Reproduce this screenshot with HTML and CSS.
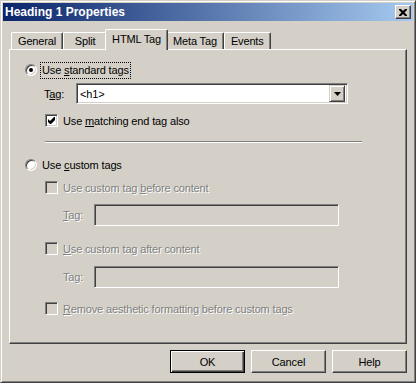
FILE: index.html
```html
<!DOCTYPE html>
<html lang="en">
<head>
    <meta charset="UTF-8">
    <title>Heading 1 Properties</title>
    <link rel="stylesheet" href="styles.css">
</head>
<body>

    <div class="window">
        <div class="titlebar">
            <span class="title">Heading 1 Properties</span>
            <span class="close">
                <svg width="8" height="7" viewBox="0 0 8 7"><path d="M0 0h2l2 2 2-2h2v1l-2.5 2.5 2.5 2.5v1h-2l-2-2-2 2h-2v-1l2.5-2.5-2.5-2.5z" fill="#000"/></svg>
            </span>
        </div>

        <div class="dialog">
            <div class="tabs">
                <div class="tab">General</div>
                <div class="tab">Split</div>
                <div class="tab active">HTML Tag</div>
                <div class="tab">Meta Tag</div>
                <div class="tab">Events</div>
            </div>

            <div class="panel">
                <div class="row r_std">
                    <span class="radio on"></span>
                    <span class="focus">Use <u>s</u>tandard tags</span>
                </div>

                <div class="row r_tag">
                    <span class="lbl">T<u>a</u>g:</span>
                    <div class="select">
                        <span class="value">&lt;h1&gt;</span>
                        <span class="drop">
                            <svg width="7" height="4" viewBox="0 0 7 4"><path d="M0 0h7l-3.5 4z" fill="#000"/></svg>
                        </span>
                    </div>
                </div>

                <div class="row sub r_match">
                    <span class="check">
                        <svg width="7" height="7" viewBox="0 0 7 7"><path d="M0 2L2 4L6 0H7V3L3 7H2L0 5Z" fill="#000"/></svg>
                    </span>
                    <span>Use <u>m</u>atching end tag also</span>
                </div>

                <div class="sep"></div>

                <div class="row r_custom">
                    <span class="radio"></span>
                    <span class="txt">Use <u>c</u>ustom tags</span>
                </div>

                <div class="row sub off r_before">
                    <span class="check dis"></span>
                    <span>Use custom tag <u>b</u>efore content</span>
                </div>

                <div class="row sub2 off r_box1">
                    <span class="lbl2"><u>T</u>ag:</span>
                    <div class="textbox"></div>
                </div>

                <div class="row sub off r_after">
                    <span class="check dis"></span>
                    <span><u>U</u>se custom tag after content</span>
                </div>

                <div class="row sub2 off r_box2">
                    <span class="lbl2">Ta<u>g</u>:</span>
                    <div class="textbox"></div>
                </div>

                <div class="row sub off r_remove">
                    <span class="check dis"></span>
                    <span><u>R</u>emove aesthetic formatting before custom tags</span>
                </div>
            </div>

            <div class="buttons">
                <button class="btn default">OK</button>
                <button class="btn">Cancel</button>
                <button class="btn">Help</button>
            </div>
        </div>
    </div>

</body>
</html>
```

FILE: styles.css
```css
* {
    margin: 0px;
    padding: 0px;
    box-sizing: border-box;
}

body {
    background-color: #d4d0c8;
    font-family: "Liberation Sans", Arial, sans-serif;
    font-size: 11px;
    letter-spacing: -0.15px;
    color: #000;
}

u {
    text-decoration: underline;
    text-underline-offset: 1px;
}

.window {
    width: 416px;
    height: 383px;
    border: 1px solid;
    border-color: #d4d0c8 #404040 #404040 #d4d0c8;
    box-shadow: inset 1px 1px #fff, inset -1px -1px #808080;
    padding: 2px;
    background-color: #d4d0c8;
}

/* title bar */
.titlebar {
    height: 18px;
    display: flex;
    align-items: center;
    justify-content: space-between;
    padding: 0 2px 0 2px;
    background: linear-gradient(to right, #0a246a, #a6caf0);
}

.title {
    color: #fff;
    font-weight: bold;
    font-size: 12px;
    letter-spacing: 0;
}

.close {
    width: 16px;
    height: 14px;
    display: flex;
    align-items: center;
    justify-content: center;
    background-color: #d4d0c8;
    border: 1px solid;
    border-color: #fff #404040 #404040 #fff;
    box-shadow: inset -1px -1px #808080;
}

/* dialog body */
.dialog {
    padding: 8px 6px 0 6px;
}

.tabs {
    display: flex;
    align-items: flex-end;
    height: 20px;
    padding-left: 2px;
}

.tab {
    height: 17px;
    min-width: 44px;
    padding: 0 6px;
    display: flex;
    align-items: center;
    justify-content: center;
    border-top: 1px solid #fff;
    border-left: 1px solid #fff;
    border-right: 1px solid #404040;
    box-shadow: inset -1px 0 #808080;
    border-radius: 2px 2px 0 0;
    background-color: #d4d0c8;
}

.tab.active {
    height: 21px;
    margin: 0 -2px -1px -2px;
    padding: 0 6px 2px 6px;
    z-index: 1;
}

.panel {
    height: 295px;
    border: 1px solid;
    border-color: #fff #404040 #404040 #fff;
    box-shadow: inset -1px -1px #808080;
    padding-left: 15px;
}

.row {
    display: flex;
    align-items: center;
}

.off {
    color: #808080;
    text-shadow: 1px 1px 0 #fff;
}

.r_std { height: 16px; margin-top: 12px; }
.r_tag { height: 21px; margin-top: 5px; padding-left: 19px; }
.r_match { height: 13px; margin-top: 10px; }
.r_custom { height: 16px; margin-top: 14px; }
.r_before { height: 13px; margin-top: 8px; }
.r_box1 { height: 22px; margin-top: 10px; }
.r_after { height: 13px; margin-top: 16px; }
.r_box2 { height: 22px; margin-top: 11px; }
.r_remove { height: 13px; margin-top: 14px; }

.sub {
    padding-left: 20px;
    gap: 5px;
}

.sub2 {
    padding-left: 38px;
}

/* radio buttons */
.radio {
    width: 12px;
    height: 12px;
    border-radius: 50%;
    border: 1px solid;
    border-color: #808080 #fff #fff #808080;
    box-shadow: inset 1px 1px #404040, inset -1px -1px #d4d0c8;
    background-color: #fff;
    display: flex;
    align-items: center;
    justify-content: center;
    margin-right: 4px;
}

.radio.on::after {
    content: "";
    width: 4px;
    height: 4px;
    border-radius: 50%;
    background-color: #000;
}

.focus {
    outline: 1px dotted #000;
    padding: 1px 1px 1px 1px;
    line-height: 13px;
}

.txt {
    padding-left: 1px;
}

/* check boxes */
.check {
    width: 13px;
    height: 13px;
    border: 1px solid;
    border-color: #808080 #fff #fff #808080;
    box-shadow: inset 1px 1px #404040, inset -1px -1px #d4d0c8;
    background-color: #fff;
    display: flex;
    align-items: center;
    justify-content: center;
}

.check.dis {
    background-color: #d4d0c8;
}

/* fields */
.lbl {
    width: 32px;
}

.lbl2 {
    width: 31px;
}

.select {
    width: 272px;
    height: 21px;
    display: flex;
    align-items: center;
    justify-content: space-between;
    border: 1px solid;
    border-color: #808080 #fff #fff #808080;
    box-shadow: inset 1px 1px #404040, inset -1px -1px #d4d0c8;
    background-color: #fff;
    padding: 2px 2px 2px 3px;
}

.drop {
    width: 16px;
    height: 17px;
    display: flex;
    align-items: center;
    justify-content: center;
    background-color: #d4d0c8;
    border: 1px solid;
    border-color: #d4d0c8 #404040 #404040 #d4d0c8;
    box-shadow: inset 1px 1px #fff, inset -1px -1px #808080;
}

.textbox {
    width: 245px;
    height: 22px;
    border: 1px solid;
    border-color: #808080 #fff #fff #808080;
    box-shadow: inset 1px 1px #404040, inset -1px -1px #d4d0c8;
    background-color: #d4d0c8;
}

.sep {
    margin: 14px 0 0 20px;
    width: 317px;
    border-top: 1px solid #808080;
    border-bottom: 1px solid #fff;
}

/* buttons */
.buttons {
    display: flex;
    justify-content: flex-end;
    gap: 6px;
    margin-top: 6px;
}

.btn {
    width: 75px;
    height: 23px;
    font-family: "Liberation Sans", Arial, sans-serif;
    font-size: 11px;
    letter-spacing: -0.15px;
    color: #000;
    background-color: #d4d0c8;
    border: 1px solid;
    border-color: #fff #404040 #404040 #fff;
    box-shadow: inset -1px -1px #808080;
}

.btn.default {
    border: 1px solid #000;
    box-shadow: inset 1px 1px #fff, inset -1px -1px #404040, inset -2px -2px #808080;
}
```
